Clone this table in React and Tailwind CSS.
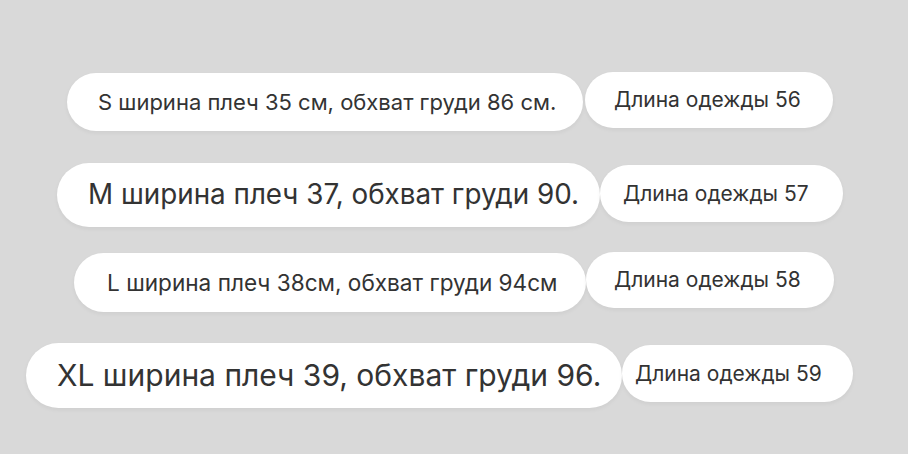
import React from "react";

const pill =
  "flex items-center shrink-0 rounded-full bg-white text-[#333333] whitespace-nowrap shadow-[0_2px_4px_rgba(0,0,0,0.05)]";

export default function App() {
  return (
    <div
      className="w-[908px] h-[454px] overflow-hidden bg-[#d9d9d9] flex flex-col"
      style={{ fontFamily: "Inter, 'Noto Sans', sans-serif" }}
    >
      <div className="flex items-start mt-[72px] ml-[67px]">
        <div className={`${pill} mt-[1px] w-[516px] h-[58px] pl-[31px] text-[22px]`}>
          S ширина плеч 35 см, обхват груди 86 см.
        </div>
        <div className={`${pill} ml-[2px] w-[248px] h-[56px] pl-[29px] text-[21px]`}>
          Длина одежды 56
        </div>
      </div>

      <div className="flex items-start mt-[32px] ml-[57px]">
        <div className={`${pill} w-[543px] h-[64px] pl-[31px] text-[27.8px]`}>
          M ширина плеч 37, обхват груди 90.
        </div>
        <div className={`${pill} mt-[2px] w-[243px] h-[57px] pl-[23px] text-[21px]`}>
          Длина одежды 57
        </div>
      </div>

      <div className="flex items-start mt-[25px] ml-[74px]">
        <div className={`${pill} mt-[1px] w-[512px] h-[59px] pl-[33px] text-[22.6px]`}>
          L ширина плеч 38см, обхват груди 94см
        </div>
        <div className={`${pill} w-[248px] h-[56px] pl-[28px] text-[21px]`}>
          Длина одежды 58
        </div>
      </div>

      <div className="flex items-start mt-[31px] ml-[26px]">
        <div className={`${pill} w-[596px] h-[65px] pl-[31px] text-[30px]`}>
          XL ширина плеч 39, обхват груди 96.
        </div>
        <div className={`${pill} mt-[2px] w-[231px] h-[57px] pl-[13px] text-[21px]`}>
          Длина одежды 59
        </div>
      </div>
    </div>
  );
}
